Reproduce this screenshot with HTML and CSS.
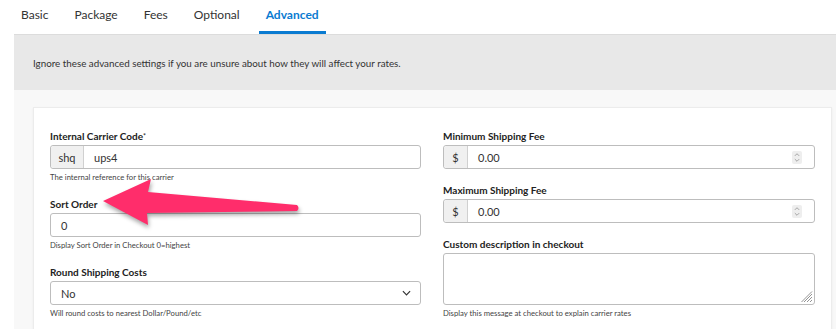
FILE: index.html
```html
<!DOCTYPE html>
<html lang="en">
<head>
  <meta charset="UTF-8" />
  <title>Carrier - Advanced</title>
  <link rel="stylesheet" href="styles.css">
</head>
<body>
  <nav class="tabs">
    <a class="tab">Basic</a>
    <a class="tab">Package</a>
    <a class="tab">Fees</a>
    <a class="tab">Optional</a>
    <a class="tab active">Advanced</a>
  </nav>
  <div class="notice">Ignore these advanced settings if you are unsure about how they will affect your rates.</div>
  <div class="content">
    <div class="card">
      <div class="col">
        <div class="field">
          <label>Internal Carrier Code<sup>*</sup></label>
          <div class="input-group">
            <span class="addon addon-wide">shq</span>
            <span class="input-text">ups4</span>
          </div>
          <p class="help">The internal reference for this carrier</p>
        </div>
        <div class="field">
          <label>Sort Order</label>
          <div class="input-group">
            <span class="input-text">0</span>
          </div>
          <p class="help">Display Sort Order in Checkout 0=highest</p>
        </div>
        <div class="field">
          <label>Round Shipping Costs</label>
          <div class="input-group select">
            <span class="input-text">No</span>
            <svg class="chevron" viewBox="0 0 10 6"><path d="M1 1l4 4 4-4" fill="none" stroke="#333" stroke-width="1.3"/></svg>
          </div>
          <p class="help">Will round costs to nearest Dollar/Pound/etc</p>
        </div>
      </div>
      <div class="col">
        <div class="field tight">
          <label>Minimum Shipping Fee</label>
          <div class="input-group">
            <span class="addon">$</span>
            <span class="input-text">0.00</span>
            <span class="spin"><svg viewBox="0 0 8 12"><path d="M2 4.5l2-2 2 2M2 7.5l2 2 2-2" fill="none" stroke="#999" stroke-width="0.8"/></svg></span>
          </div>
        </div>
        <div class="field tight">
          <label>Maximum Shipping Fee</label>
          <div class="input-group">
            <span class="addon">$</span>
            <span class="input-text">0.00</span>
            <span class="spin"><svg viewBox="0 0 8 12"><path d="M2 4.5l2-2 2 2M2 7.5l2 2 2-2" fill="none" stroke="#999" stroke-width="0.8"/></svg></span>
          </div>
        </div>
        <div class="field">
          <label>Custom description in checkout</label>
          <div class="textarea">
            <svg class="grip" viewBox="0 0 12 12"><path d="M11 3L3 11M11 6L6 11M11 9L9 11M11 0.5L0.5 11" fill="none" stroke="#888" stroke-width="0.9"/></svg>
          </div>
          <p class="help">Display this message at checkout to explain carrier rates</p>
        </div>
      </div>
    </div>
  </div>
  <svg class="arrow" width="836" height="329" viewBox="0 0 836 329">
    <path d="M103 201 L151 179 L148 192 L297 205 Q300 208 297 211 L147 213 L148 225 Z" fill="#ff2d6b"/>
  </svg>
</body>
</html>
```

FILE: styles.css
```css
* { box-sizing: border-box; margin: 0; padding: 0; }
body {
  font-family: Lato, 'Liberation Sans', sans-serif;
  color: #303030;
  background: #fff;
  padding-left: 14px;
  overflow: hidden;
  height: 329px;
}
.tabs {
  display: flex;
  height: 34px;
}
.tab {
  display: flex;
  align-items: center;
  padding: 0 7px 3px;
  margin-right: 12px;
  font-size: 12px;
  color: #333;
  border-bottom: 3px solid transparent;
}
.tab.active {
  color: #0a7bd1;
  font-weight: 700;
  border-bottom-color: #0a7bd1;
}
.notice {
  border-top: 1px solid #dcdcdc;
  background: #e8e8e8;
  height: 56px;
  padding: 0 19px 0 19px;
  display: flex;
  align-items: center;
  font-size: 9.8px;
  color: #333;
}
.content {
  background: #f8f8f8;
  padding: 17px 4px 0 19px;
}
.card {
  background: #fff;
  border: 1px solid #ececec;
  box-shadow: 0 1px 2px rgba(0, 0, 0, 0.06);
  padding: 22px 16px 20px 16px;
  display: grid;
  grid-template-columns: 371px 372px;
  gap: 22px;
}
.field { margin-bottom: 16px; }
.field.tight { margin-bottom: 15px; }
.field label {
  display: block;
  font-size: 10px;
  font-weight: 700;
  line-height: 12px;
  margin-bottom: 3px;
  color: #222;
}
.field sup { font-size: 7px; font-weight: 400; vertical-align: top; }
.input-group {
  display: flex;
  align-items: center;
  height: 24px;
  border: 1px solid #bdbdbd;
  border-radius: 3px;
  font-size: 11px;
  color: #333;
}
.addon {
  width: 24px;
  height: 100%;
  display: flex;
  align-items: center;
  justify-content: center;
  background: #f0f0f0;
  border-right: 1px solid #d0d0d0;
  border-radius: 3px 0 0 3px;
}
.addon-wide { width: 33px; }
.input-text { padding-left: 10px; flex: 1; }
.spin {
  width: 10px;
  height: 13px;
  background: #eee;
  border-radius: 2px;
  margin-right: 12px;
  display: flex;
}
.spin svg { width: 10px; height: 13px; }
.select .chevron { width: 9px; height: 6px; margin-right: 9px; }
.help {
  font-size: 7.7px;
  line-height: 10px;
  margin-top: 3px;
  color: #444;
}
.textarea {
  height: 52px;
  border: 1px solid #bdbdbd;
  border-radius: 3px;
  position: relative;
}
.grip {
  position: absolute;
  right: 1px;
  bottom: 1px;
  width: 12px;
  height: 12px;
}
.arrow {
  position: absolute;
  left: 0;
  top: 0;
  pointer-events: none;
  filter: drop-shadow(1px 3px 2px rgba(0, 0, 0, 0.35));
}
```
